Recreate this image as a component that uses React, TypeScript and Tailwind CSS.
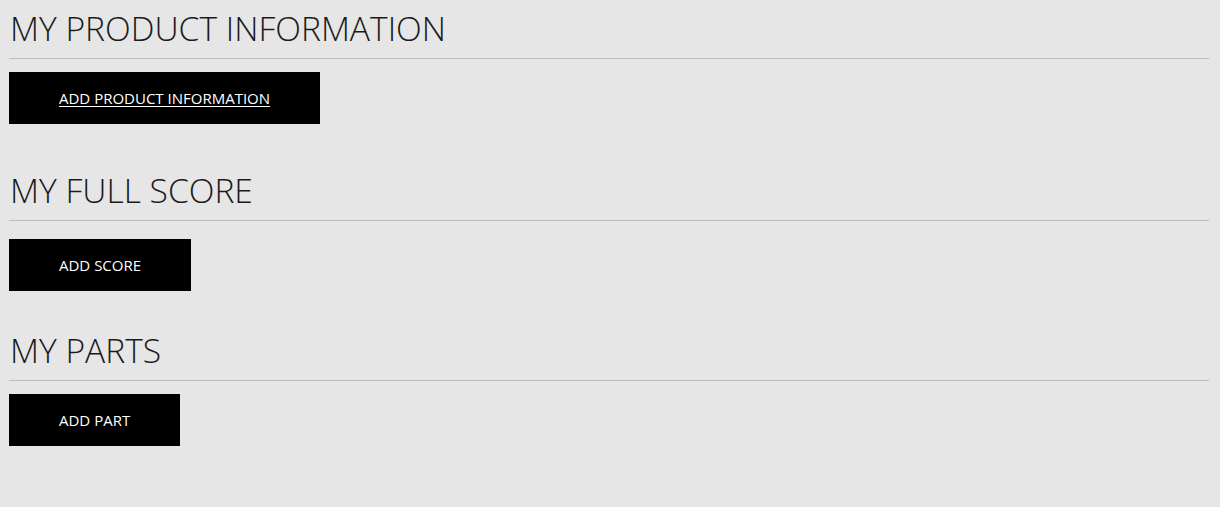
import React from "react";

function Section({ title, button, underline, headMt, btnMt }: { title: string; button: string; underline?: boolean; headMt: string; btnMt: string }) {
  return (
    <div className={headMt}>
      <h2 className="text-[33.6px] leading-[40px] font-light text-[#1a1a1a] pb-[10px] border-b border-[#bcbcbc] pl-px" style={{ fontFamily: '"Open Sans", sans-serif' }}>
        {title}
      </h2>
      <div className={btnMt}>
        <a
          href="#"
          className={`inline-flex items-center h-[52px] px-[50px] bg-black text-white text-[15px] ${underline ? "underline underline-offset-2" : "no-underline"}`}
          style={{ fontFamily: '"Open Sans", sans-serif' }}
        >
          {button}
        </a>
      </div>
    </div>
  );
}

export default function App() {
  return (
    <div className="min-h-[507px] w-full bg-[#e6e6e6]">
      <div className="ml-[9px] w-[1200px]">
        <Section title="MY PRODUCT INFORMATION" button="ADD PRODUCT INFORMATION" underline headMt="pt-[8px]" btnMt="mt-[13px]" />
        <Section title="MY FULL SCORE" button="ADD SCORE" headMt="mt-[46px]" btnMt="mt-[18px]" />
        <Section title="MY PARTS" button="ADD PART" headMt="mt-[39px]" btnMt="mt-[13px]" />
      </div>
    </div>
  );
}
